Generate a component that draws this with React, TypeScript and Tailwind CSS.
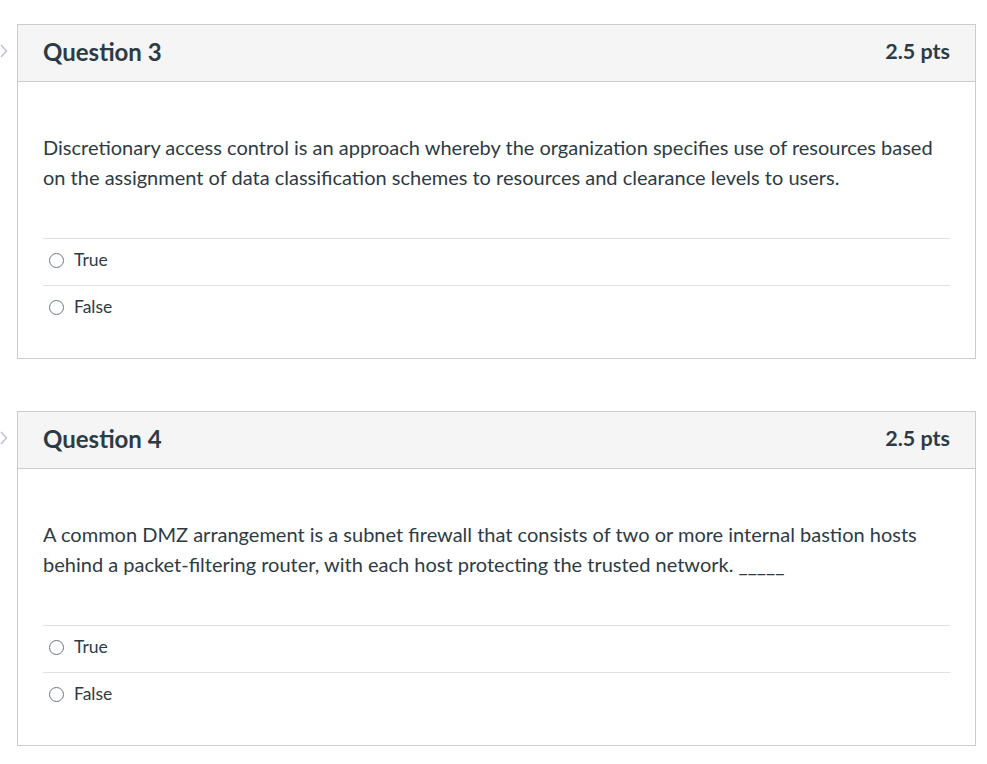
const Chevron = () => (
  <svg width="8" height="14" viewBox="0 0 8 14" fill="none" stroke="#b8c4d0" strokeWidth={1.5}>
    <path d="M1 1l5.5 6L1 13" />
  </svg>
);

type Q = { num: number; text: string[]; };

const questions: Q[] = [
  {
    num: 3,
    text: [
      "Discretionary access control is an approach whereby the organization specifies use of resources based",
      "on the assignment of data classification schemes to resources and clearance levels to users.",
    ],
  },
  {
    num: 4,
    text: [
      "A common DMZ arrangement is a subnet firewall that consists of two or more internal bastion hosts",
      "behind a packet-filtering router, with each host protecting the trusted network. _____",
    ],
  },
];

function Answer({ label }: { label: string }) {
  return (
    <div className="flex h-[47px] items-center border-t border-[#dfe1e3] pl-[6px] pb-[3px]">
      <span className="h-[15px] w-[15px] rounded-full border border-[#6b7780] bg-white" />
      <span className="ml-[10px] text-[17.5px] text-[#2d3b45]">{label}</span>
    </div>
  );
}

function Question({ q }: { q: Q }) {
  return (
    <div className="flex">
      <div className="flex w-[17px] shrink-0 items-start pt-[20px]">
        <Chevron />
      </div>
      <div className="w-[959px] border border-[#c7cdd1] bg-white">
        <div className="flex h-[57px] items-center justify-between border-b border-[#c7cdd1] bg-[#f5f5f5] px-[25px] pb-[3px]">
          <span className="text-[24px] font-bold text-[#2d3b45]">Question {q.num}</span>
          <span className="text-[21.5px] font-bold text-[#2d3b45]">2.5 pts</span>
        </div>
        <div className="px-[25px] pt-[50px] pb-[26px]">
          <p className="text-[20px] leading-[30px] text-[#2d3b45]">
            {q.text[0]}
            <br />
            {q.text[1]}
          </p>
          <div className="mt-[46px]">
            <Answer label="True" />
            <Answer label="False" />
          </div>
        </div>
      </div>
    </div>
  );
}

export default function App() {
  return (
    <div className="min-h-screen bg-white pt-[24px] font-['Lato','Liberation_Sans',sans-serif]">
      <div className="flex flex-col gap-[52px]">
        {questions.map((q) => (
          <Question key={q.num} q={q} />
        ))}
      </div>
    </div>
  );
}
